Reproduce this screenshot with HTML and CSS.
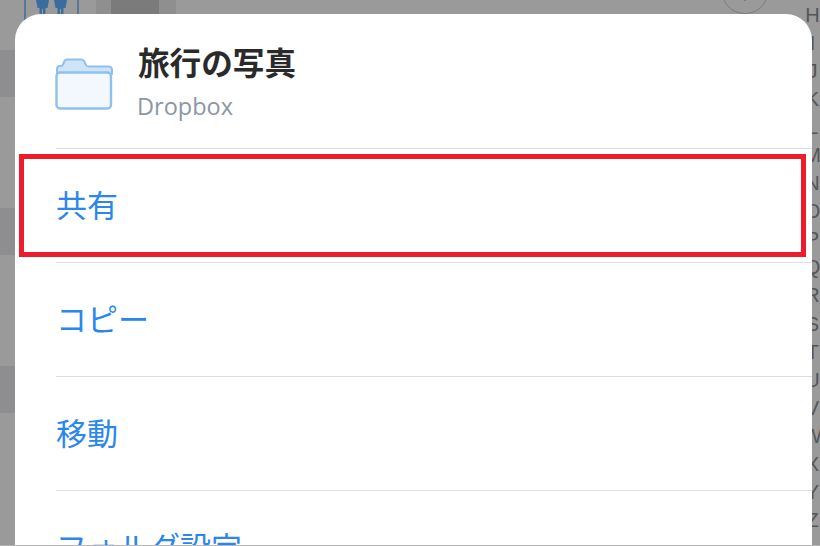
FILE: index.html
```html
<!DOCTYPE html>
<html lang="ja">
<head>
<meta charset="utf-8">
<title>旅行の写真</title>
<link rel="stylesheet" href="styles.css">
</head>
<body>
<div class="screen">
  <div class="backdrop" aria-hidden="true">
    <div class="bands"><i></i><i></i><i></i></div>
    <div class="tile">
      <svg class="people" width="54" height="15" viewBox="0 0 54 15">
        <g fill="#3a6d9e">
          <path d="M10 0h13l-1.500 8h-2v7h-2.500v-6h-1v6h-2.500V8h-2z"/>
          <path d="M28 0h13l-1.500 8h-2v7h-2.500v-6h-1v6h-2.500V8h-2z"/>
        </g>
      </svg>
    </div>
    <div class="thumb"></div>
    <div class="round"></div>
    <div class="index">
      <span>H</span><span>I</span><span>J</span><span>K</span><span>L</span><span>M</span><span>N</span><span>O</span><span>P</span><span>Q</span><span>R</span><span>S</span><span>T</span><span>U</span><span>V</span><span>W</span><span>X</span><span>Y</span><span>Z</span>
    </div>
  </div>

  <div class="sheet">
    <header class="head">
      <svg class="folder" width="58" height="53" viewBox="0 0 58 53">
        <path d="M2 16V11q0-3 3-3h1q1.500 0 2-1.500l1.500-3.500q.6-1.500 2.500-1.500h14q2 0 3 1.500l2 4q.6 1.500 2.500 1.500h20q3.500 0 3.500 3.500V16z" fill="#cfe4fb" stroke="#8fc1ef" stroke-width="2" stroke-linejoin="round"/>
        <rect x="1.500" y="14.500" width="54.500" height="36" rx="3.500" fill="#f2f8fe" stroke="#8fc1ef" stroke-width="2.400"/>
      </svg>
      <div class="names">
        <h1 class="title">旅行の写真</h1>
        <p class="source">Dropbox</p>
      </div>
    </header>
    <div class="row row-marked">共有<div class="mark"></div></div>
    <div class="row">コピー</div>
    <div class="row">移動</div>
    <div class="row">フォルダ設定</div>
  </div>
  <div class="edge"></div>
</div>
</body>
</html>
```
FILE: styles.css
```css
* { box-sizing: border-box; }
html, body { margin: 0; padding: 0; }
body { width: 820px; height: 546px; overflow: hidden; }

.screen {
  position: relative;
  width: 820px;
  height: 546px;
  overflow: hidden;
  background: #9a9a9a;
  padding: 14px 8px 0 15px;
  font-family: "Noto Sans CJK JP", "Noto Sans", sans-serif;
}

.backdrop { position: absolute; inset: 0; }
.bands { position: absolute; left: 0; top: 50px; width: 15px; display: flex; flex-direction: column; gap: 111px; }
.bands i { display: block; height: 47px; background: #8e8e90; }

.tile {
  position: absolute; left: 24px; top: 0; width: 55px; height: 20px;
  border: solid #56779a; border-width: 0 2px;
}
.people { display: block; margin-left: 0; }

.thumb {
  position: absolute; left: 96px; top: 0; width: 80px; height: 14px;
  background: linear-gradient(90deg, #8f8f8f 0 15px, #7b7b7b 15px 63px, #8f8f8f 63px);
}
.round {
  position: absolute; left: 722px; top: -31.500px; width: 45.500px; height: 45.500px;
  border: 1.500px solid #7c7c7c; border-radius: 50%;
}
.round::after {
  content: ""; position: absolute; left: 20.500px; top: 28px; width: 2px; height: 3px; background: #7c7c7c;
}
.index {
  position: absolute; left: 805px; top: 1px; width: 15px;
  display: flex; flex-direction: column; align-items: center;
  font: 20px/28.050px "Liberation Sans", sans-serif; color: #555;
}
.index span { display: block; height: 28.050px; }

.sheet {
  position: relative;
  width: 797px;
  min-height: 560px;
  background: #fff;
  border-radius: 26px 26px 0 0;
}

.head {
  display: flex;
  align-items: flex-start;
  gap: 25px;
  height: 135px;
  padding: 44px 0 0 40px;
}
.folder { flex: none; display: block; }
.names { margin-top: -20px; }
.title { margin: 0; font-size: 31.600px; line-height: 46px; font-weight: 700; color: #2a2a2a; white-space: nowrap; }
.source { margin: 6px 0 0 -1px; font-family: "Open Sans", sans-serif; font-size: 23.500px; line-height: 32px; color: #8b97a3; }

.head, .row { position: relative; }
.head::after {
  content: ""; position: absolute; left: 41px; right: 0; bottom: 0; height: 1.500px; background: #dedede;
}
.row {
  height: 114px;
  margin-left: 41px;
  padding-top: 30px;
  border-bottom: 1.500px solid #dedede;
  font-size: 31px;
  line-height: 50px;
  font-weight: 400;
  color: #2b86ee;
  white-space: nowrap;
}
.mark {
  position: absolute;
  left: -37px; top: 5px;
  width: 787px; height: 103px;
  border: 5px solid #ed1c2a;
}
.edge { position: absolute; left: 0; right: 0; bottom: 0; height: 1px; background: #b5b5b5; }
```
